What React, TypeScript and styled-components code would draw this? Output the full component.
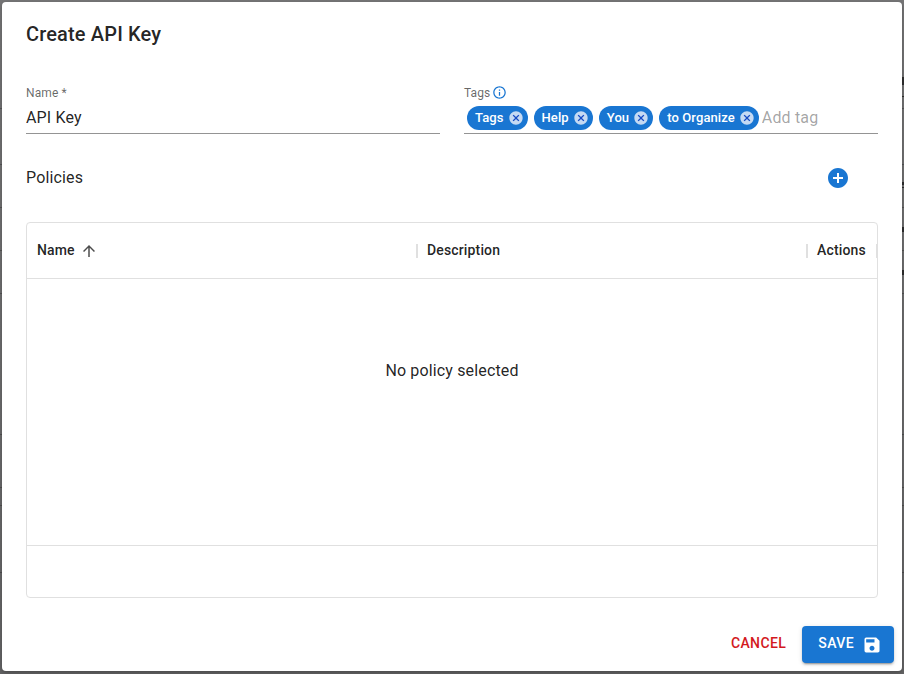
import React from "react";
import styled, { createGlobalStyle } from "styled-components";
import {
  MdAddCircle,
  MdArrowUpward,
  MdCancel,
  MdInfoOutline,
  MdSave,
} from "react-icons/md";

const BLUE = "#1976d2";

/* Row borders of the dimmed page that stay visible beside the dialog. */
const rowLines = [108, 164, 207, 250, 293, 434, 487, 505, 572]
  .map(
    (y) =>
      `linear-gradient(rgba(0,0,0,.25), rgba(0,0,0,.25)) 0 ${y}px / 100% 1px no-repeat`
  )
  .join(", ");

/* Ends of the page's text and rules, cut off by the dialog's right edge: [top, height]. */
const edgeMarks = [
  [77, 8],
  [96, 1],
  [182, 3],
  [187, 1],
  [227, 5],
  [270, 5],
]
  .map(
    ([y, h]) =>
      `linear-gradient(rgba(0,0,0,.6), rgba(0,0,0,.6)) 100% ${y}px / 2px ${h}px no-repeat`
  )
  .join(", ");

const GlobalStyle = createGlobalStyle`
  * { box-sizing: border-box; }
  body {
    margin: 0;
    font-family: Roboto, "Liberation Sans", sans-serif;
    color: rgba(0, 0, 0, 0.87);
  }
`;

const Backdrop = styled.div`
  height: 674px;
  padding: 2px 2px 3px;
  background: ${edgeMarks}, ${rowLines}, linear-gradient(#757576, #646465);
`;

const Dialog = styled.section`
  height: 669px;
  display: flex;
  flex-direction: column;
  background: #fff;
  border-radius: 4px;
  box-shadow: 0 2px 4px rgba(0, 0, 0, 0.25);
`;

const Title = styled.h2`
  margin: 0;
  padding: 16px 24px;
  font-size: 20px;
  font-weight: 500;
  line-height: 32px;
  letter-spacing: 0.15px;
`;

const Fields = styled.div`
  display: grid;
  grid-template-columns: repeat(2, minmax(0, 1fr));
  gap: 24px;
  padding: 18px 24px 0;
`;

const Field = styled.div`
  height: 50px;
  border-bottom: 1px solid #949494;
`;

const Label = styled.div`
  display: flex;
  align-items: center;
  gap: 2px;
  height: 17px;
  font-size: 12px;
  letter-spacing: 0.11px;
  color: rgba(0, 0, 0, 0.6);

  svg {
    color: ${BLUE};
  }
`;

const FieldBody = styled.div`
  display: flex;
  align-items: center;
  height: 32px;
`;

const TextInput = styled.input<{ $gap?: number }>`
  flex: 1;
  min-width: 0;
  margin-left: ${(p) => p.$gap ?? 0}px;
  padding: 0;
  border: 0;
  outline: 0;
  font: 400 16px/23px Roboto, sans-serif;
  letter-spacing: 0.15px;
  color: rgba(0, 0, 0, 0.87);

  &::placeholder {
    color: rgba(0, 0, 0, 0.37);
    opacity: 1;
  }
`;

const Chips = styled.div`
  display: flex;
  gap: 6px;
  margin-left: 3px;
  padding-top: 2px;
`;

const Chip = styled.span`
  display: flex;
  align-items: center;
  height: 24px;
  padding: 0 4px 0 8px;
  border-radius: 12px;
  background: ${BLUE};
  color: #fff;
  font-size: 13px;
  font-weight: 500;
  line-height: 16px;
  letter-spacing: 0.1px;
  white-space: nowrap;

  svg {
    margin-left: 4px;
    border-radius: 50%;
    background: radial-gradient(circle, #174cc4 50%, transparent 52%);
    color: #c5daf3;
  }
`;

const ChipText = styled.span`
  padding-bottom: 1px;
`;

const SectionHead = styled.div`
  display: flex;
  align-items: center;
  justify-content: space-between;
  height: 88px;
  padding: 0 52px 0 24px;
  font-size: 16px;
  letter-spacing: 0.15px;

  svg {
    color: ${BLUE};
  }
`;

const SectionTitle = styled.span`
  padding-bottom: 2px;
`;

const Grid = styled.div`
  display: flex;
  flex-direction: column;
  height: 376px;
  margin: 0 24px;
  border: 1px solid #e0e0e0;
  border-radius: 4px;
`;

const GridHeader = styled.div`
  display: grid;
  grid-template-columns: 391px 390px 1fr;
  height: 56px;
  border-bottom: 1px solid #e0e0e0;
`;

const HeaderCell = styled.div`
  display: flex;
  align-items: center;
  padding-left: 9px;
  font-size: 14px;
  font-weight: 500;
  letter-spacing: 0.15px;

  &:first-child {
    padding-left: 10px;
  }

  svg {
    margin: 1px 0 0 5px;
    color: rgba(0, 0, 0, 0.7);
  }

  &::after {
    content: "";
    width: 2px;
    height: 14px;
    margin-left: auto;
    background: #e0e0e0;
  }

  &:last-child::after {
    width: 1px;
  }
`;

const HeaderText = styled.span`
  padding-bottom: 2px;
`;

const GridBody = styled.div`
  flex: 1;
  padding-top: 81px;
  text-align: center;
  font-size: 16px;
  line-height: 22px;
  letter-spacing: 0.15px;
`;

const GridFooter = styled.div`
  height: 52px;
  border-top: 1px solid #e0e0e0;
`;

const Actions = styled.footer`
  display: flex;
  justify-content: flex-end;
  gap: 8px;
  padding: 28px 8px 0;
`;

const Button = styled.button<{ $filled?: boolean }>`
  display: flex;
  align-items: center;
  height: 37px;
  padding: ${(p) => (p.$filled ? "0 12px 4px 16px" : "0 8px 4px")};
  border: 0;
  border-radius: 4px;
  background: ${(p) => (p.$filled ? BLUE : "transparent")};
  box-shadow: ${(p) =>
    p.$filled
      ? "0 3px 1px -2px rgba(0,0,0,.2), 0 2px 2px rgba(0,0,0,.14), 0 1px 5px rgba(0,0,0,.12)"
      : "none"};
  color: ${(p) => (p.$filled ? "#fff" : "#d3191e")};
  font: 500 14px/24px Roboto, sans-serif;
  letter-spacing: 0.4px;

  svg {
    margin: 5px 0 0 8px;
  }
`;

const tags = ["Tags", "Help", "You", "to Organize"];

export default function App() {
  return (
    <>
      <GlobalStyle />
      <Backdrop>
        <Dialog>
          <Title>Create API Key</Title>
          <Fields>
            <Field>
              <Label>Name *</Label>
              <FieldBody>
                <TextInput defaultValue="API Key" />
              </FieldBody>
            </Field>
            <Field>
              <Label>
                Tags <MdInfoOutline size={15} />
              </Label>
              <FieldBody>
                <Chips>
                  {tags.map((tag) => (
                    <Chip key={tag}>
                      <ChipText>{tag}</ChipText>
                      <MdCancel size={16} />
                    </Chip>
                  ))}
                </Chips>
                <TextInput $gap={3} placeholder="Add tag" />
              </FieldBody>
            </Field>
          </Fields>
          <SectionHead>
            <SectionTitle>Policies</SectionTitle>
            <MdAddCircle size={24} />
          </SectionHead>
          <Grid>
            <GridHeader>
              <HeaderCell>
                <HeaderText>Name</HeaderText>
                <MdArrowUpward size={18} />
              </HeaderCell>
              <HeaderCell>
                <HeaderText>Description</HeaderText>
              </HeaderCell>
              <HeaderCell>
                <HeaderText>Actions</HeaderText>
              </HeaderCell>
            </GridHeader>
            <GridBody>No policy selected</GridBody>
            <GridFooter />
          </Grid>
          <Actions>
            <Button>CANCEL</Button>
            <Button $filled>
              SAVE
              <MdSave size={20} />
            </Button>
          </Actions>
        </Dialog>
      </Backdrop>
    </>
  );
}
